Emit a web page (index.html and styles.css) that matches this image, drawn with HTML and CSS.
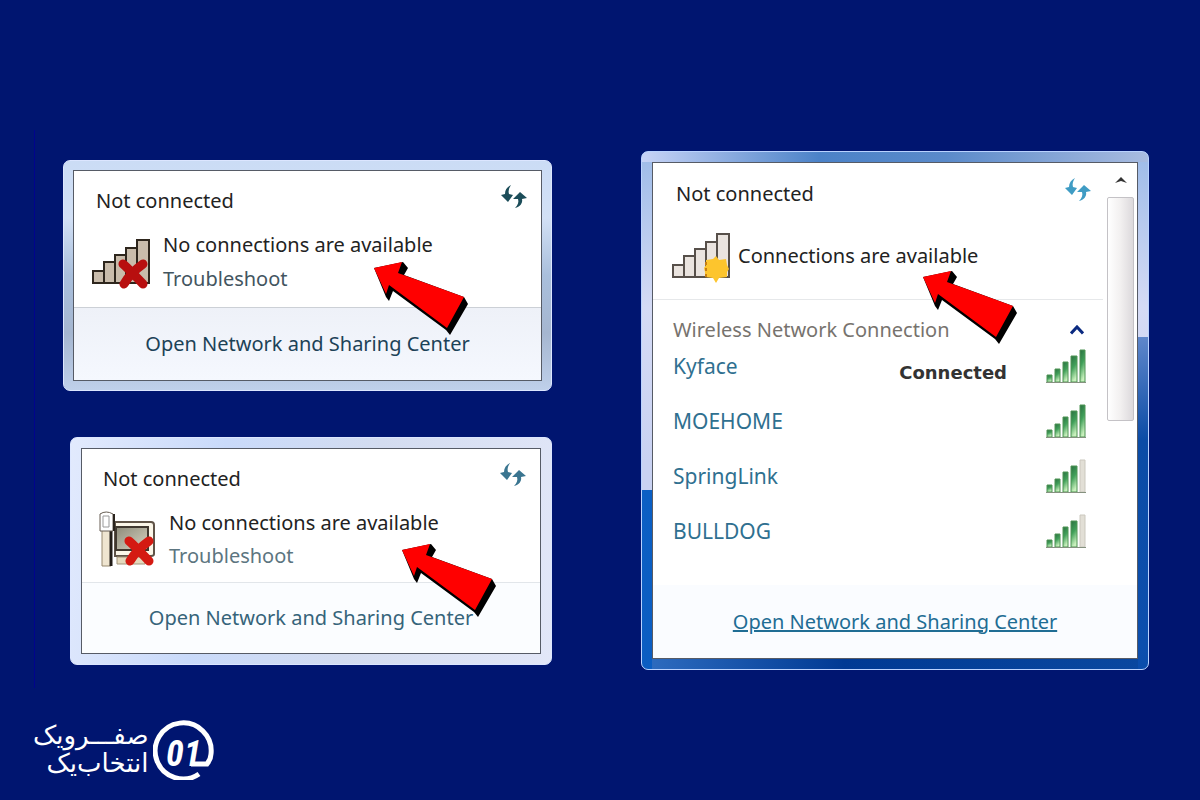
FILE: index.html
```
<!DOCTYPE html>
<html lang="en">
<head>
  <meta charset="UTF-8">
  <meta name="viewport" content="width=device-width, initial-scale=1.0">
  <title>Network connections</title>
  <link rel="stylesheet" href="styles.css">
</head>
<body>
  <!-- shared shapes -->
  <svg class="defs" width="0" height="0" aria-hidden="true">
    <defs>
      <linearGradient id="green" x1="0" y1="0" x2="0.3" y2="1">
        <stop offset="0" stop-color="#2a7040"/>
        <stop offset="0.5" stop-color="#41a05a"/>
        <stop offset="1" stop-color="#c9f0bd"/>
      </linearGradient>
      <linearGradient id="screen" x1="0" y1="0" x2="1" y2="1">
        <stop offset="0" stop-color="#8d8b7a"/>
        <stop offset="1" stop-color="#d8d4c2"/>
      </linearGradient>
      <symbol id="arrow" viewBox="0 0 94 73">
        <path fill="#000" d="M0 6 29 0 34 6 30 13 90 35 94 42 76 73 72 68 19 29 15 39 12 35z"/>
        <path fill="#f00" d="M0 6 28 0 24 11 90 35 73 66 15 23 12 32z"/>
      </symbol>
      <symbol id="refresh" viewBox="0 0 26 24">
        <path d="M10 0C6 2 4 5 4 9L0 10l7 7 5-7-4-1C7 6 8 3 10 0z"/>
        <path d="M19 7l-7 7 5 0c1 3 0 6-3 9 5-1 8-5 7-9l5-1z"/>
      </symbol>
      <symbol id="cross" viewBox="0 0 30 30">
        <path d="M5 5C11 10 18 18 25 25M25 5C18 10 10 18 6 25" fill="none" stroke-width="9" stroke-linecap="round"/>
      </symbol>
      <symbol id="bars" viewBox="0 0 58 46">
        <path stroke-width="2" d="M1 32h11v12H1zM12 23h11v21H12zM23 16h11v28H23zM34 9h11v35H34zM45 1h12v43H45z"/>
      </symbol>
      <symbol id="signal" viewBox="0 0 40 34">
        <g fill="url(#green)" stroke="#4f9455">
          <path d="M1 26h5v7H1z"/>
          <path d="M9 20h5v13H9z"/>
          <path d="M17 13h5v20h-5z"/>
          <path d="M25 7h6v26h-6z"/>
        </g>
        <path class="last-bar" d="M34 1h5v32h-5z"/>
        <path d="M0 33.500h40" stroke="#85917f"/>
      </symbol>
    </defs>
  </svg>

  <main class="panels">
    <div class="column">
      <section class="window">
        <div class="window-body">
          <div class="status">
            <div class="status-head">
              <h2>Not connected</h2>
              <button class="refresh dark" aria-label="Refresh"><svg width="26" height="24"><use href="#refresh"/></svg></button>
            </div>
            <div class="status-row">
              <svg class="status-icon" width="58" height="54" viewBox="0 0 58 54">
                <use href="#bars" y="4" width="58" height="46" fill="#c9bcab" stroke="#2e261d"/>
                <use href="#cross" x="26" y="24" width="30" height="30" stroke="#b80f0f"/>
              </svg>
              <div class="status-text">
                <p>No connections are available</p>
                <a href="#" class="trouble">Troubleshoot</a>
              </div>
            </div>
            <svg class="arrow" width="94" height="73"><use href="#arrow"/></svg>
          </div>
          <footer class="window-foot"><a href="#">Open Network and Sharing Center</a></footer>
        </div>
      </section>

      <section class="window window-light">
        <div class="window-body">
          <div class="status">
            <div class="status-head">
              <h2>Not connected</h2>
              <button class="refresh" aria-label="Refresh"><svg width="26" height="24"><use href="#refresh"/></svg></button>
            </div>
            <div class="status-row">
              <svg class="status-icon" width="58" height="56" viewBox="0 0 58 56">
                <path d="M16 11h36q3 0 3 3v29q0 2-3 2H16z" fill="#fbf6e8" stroke="#5f5347" stroke-width="2"/>
                <path d="M17 16h32v23H17z" fill="url(#screen)" stroke="#40382f" stroke-width="2"/>
                <path d="M18 46h28v7H18z" fill="#e4d9bd" stroke="#a2947a"/>
                <path d="M3 19h9v36H3z" fill="#efe5d0" stroke="#96886f"/>
                <path d="M12 19v36" stroke="#221d18" stroke-width="3"/>
                <path d="M1 3q6-4 13 0v17H1z" fill="#fff" stroke="#665d52"/>
                <path d="M4 5h6v11H4z" fill="#fff" stroke="#999"/>
                <path d="M15 3v17" stroke="#29231d" stroke-width="2"/>
                <use href="#cross" x="25" y="25" width="30" height="30" stroke="#d41a12"/>
              </svg>
              <div class="status-text">
                <p>No connections are available</p>
                <a href="#" class="trouble">Troubleshoot</a>
              </div>
            </div>
            <svg class="arrow" width="94" height="73"><use href="#arrow"/></svg>
          </div>
          <footer class="window-foot"><a href="#">Open Network and Sharing Center</a></footer>
        </div>
      </section>
    </div>

    <section class="window window-blue">
      <div class="window-body">
        <div class="scroll-area">
          <div class="scroll-content">
            <div class="status">
              <div class="status-head">
                <h2>Not connected</h2>
                <button class="refresh bright" aria-label="Refresh"><svg width="26" height="24"><use href="#refresh"/></svg></button>
              </div>
              <div class="status-row">
                <svg class="status-icon" width="58" height="50" viewBox="0 0 58 50">
                  <use href="#bars" width="58" height="46" fill="#eae4df" stroke="#57504a"/>
                  <path d="M44 23l3 4 7-1 1 6 2 4-2 3v5l-8 1-3 5-3-5-8-1v-5l-1-4 2-3v-5l7-1z" fill="#fdc52d"/>
                  <path d="M34 29v15" stroke="#c67f12" stroke-width="2" stroke-dasharray="3 3"/>
                </svg>
                <div class="status-text"><p>Connections are available</p></div>
              </div>
              <svg class="arrow" width="94" height="73"><use href="#arrow"/></svg>
            </div>
            <div class="group-head">
              <h3>Wireless Network Connection</h3>
              <button class="collapse" aria-label="Collapse"><svg width="14" height="10" viewBox="0 0 14 10"><path d="M1 8.500 7 2l6 6.500" fill="none" stroke="#0a2a80" stroke-width="3"/></svg></button>
            </div>
            <ul class="networks">
              <li><a href="#">Kyface</a><strong>Connected</strong><svg class="signal" width="40" height="34"><use href="#signal"/></svg></li>
              <li><a href="#">MOEHOME</a><svg class="signal" width="40" height="34"><use href="#signal"/></svg></li>
              <li><a href="#">SpringLink</a><svg class="signal weak" width="40" height="34"><use href="#signal"/></svg></li>
              <li><a href="#">BULLDOG</a><svg class="signal weak" width="40" height="34"><use href="#signal"/></svg></li>
            </ul>
          </div>
          <div class="scrollbar">
            <button aria-label="Scroll up"><svg width="12" height="7" viewBox="0 0 12 7"><path d="M0 6 6 0l6 6-6-2z" fill="#333"/></svg></button>
            <div class="thumb"></div>
          </div>
        </div>
        <footer class="window-foot"><a href="#">Open Network and Sharing Center</a></footer>
      </div>
    </section>
  </main>

  <div class="brand">
    <p lang="fa" dir="rtl">صفـــرویک<br>انتخاب‌یک</p>
    <svg width="62" height="62" viewBox="0 0 62 62" role="img" aria-label="01">
      <path d="M46 56A28 28 0 1 1 58 36Q58 41 54 46H38" fill="none" stroke="#fff" stroke-width="5"/>
      <text x="13" y="48" class="brand-mark">01</text>
    </svg>
  </div>
</body>
</html>
```
FILE: styles.css
```
* {
  box-sizing: border-box;
}

body {
  margin: 0;
  min-height: 100vh;
  display: flow-root;
  background: #001570;
  font-family: "Noto Sans", "Open Sans", sans-serif;
  font-size: 20px;
  line-height: 34px;
  color: #222;
}

h2, h3, p, ul {
  margin: 0;
  padding: 0;
  font-size: inherit;
  font-weight: normal;
}

a {
  color: #1c4257;
  text-decoration: none;
}

button {
  padding: 0;
  border: none;
  background: none;
  cursor: pointer;
}

svg {
  display: block;
  flex: none;
}

.defs {
  position: absolute;
}

.panels {
  display: grid;
  grid-template-columns: 489fr 508fr;
  gap: 89px;
  margin: 130px 0 0 34px;
  padding: 21px 51px 18px 28px;
  border-left: 1px solid #00048c;
}

.column {
  display: flex;
  flex-direction: column;
  gap: 46px;
  padding-top: 9px;
}

.window {
  display: flex;
  padding: 9px;
  border: 1px solid #dce6ff;
  border-radius: 7px;
  background: linear-gradient(#cbdcf5, #d2e0f5 25%, #a9bfdc 50%, #a5b6d0 75%, #bfd0ea);
}

.window-body {
  flex: 1;
  display: flex;
  flex-direction: column;
  border: 1px solid #565b66;
  background: #fff;
}

.status {
  position: relative;
  padding: 13px 14px 11px 18px;
  border-bottom: 1px solid #ccd0d6;
}

.status-head {
  display: flex;
  justify-content: space-between;
  padding-left: 4px;
}

.refresh {
  height: 26px;
  fill: #3a7590;
}

.refresh.dark {
  fill: #1c4d59;
}

.refresh.bright {
  fill: #3f9cc4;
}

.status-row {
  display: flex;
  align-items: center;
  gap: 13px;
  padding-top: 10px;
}

.trouble {
  display: block;
  color: #43555f;
}

.arrow {
  position: absolute;
  top: 91px;
  left: 300px;
}

.window-foot {
  flex: 1;
  display: flex;
  align-items: center;
  justify-content: center;
  min-height: 72px;
  background: linear-gradient(#eef1f8, #f5f8fe);
}

/* second window */
.window-light {
  margin-left: 7px;
  padding: 10px;
  background: linear-gradient(100deg, #e2eafd, #c9dafa 30%, #d3dcf0 60%, #e2e7f8);
}

.window-light .status {
  padding: 13px 14px 10px 17px;
  border-color: #e2e6ea;
}

.window-light .status-row {
  gap: 12px;
}

.window-light .status-text {
  line-height: 33px;
}

.window-light .window-foot {
  min-height: 70px;
  background: #fbfdff;
}

.window-light .window-foot a {
  color: #36647a;
}

.window-light .trouble {
  color: #5c7580;
}

.window-light .arrow {
  top: 95px;
  left: 320px;
}

/* window with the list of networks */
.window-blue {
  padding: 10px;
  border-color: #b9d2ff;
  background:
    linear-gradient(#5f87cb, #0b4ca6 20%, #0c4fae 60%, #003c98) right 185px / 10px 100% no-repeat,
    linear-gradient(#0b5fc4, #0b5cc0 60%, #1c4fa8) left 338px / 10px 100% no-repeat,
    linear-gradient(90deg, #2f6dc0, #003a94 40%, #0a48a0) bottom / 100% 10px no-repeat,
    linear-gradient(90deg, #c8d4f6, #4b82c8 35%, #5a8aca 60%, #a9bce0) top / 100% 10px no-repeat,
    linear-gradient(#9dbbe8, #d5dbf5 30%, #c9d2f2 60%);
}

.scroll-area {
  display: flex;
}

.scroll-content {
  flex: 1;
}

.window-blue .status {
  padding: 14px 12px 16px 19px;
  border-color: #e6e8ea;
}

.window-blue .status-row {
  align-items: flex-start;
  gap: 8px;
  padding-top: 22px;
}

.window-blue .status-text {
  line-height: 46px;
}

.window-blue .arrow {
  top: 108px;
  left: 270px;
}

.group-head {
  display: flex;
  align-items: center;
  justify-content: space-between;
  padding: 13px 19px 0 20px;
  color: #77736e;
}

.networks {
  list-style: none;
  padding: 2px 17px 16px 20px;
}

.networks li {
  display: flex;
  align-items: center;
  height: 55px;
  padding-bottom: 21px;
}

.networks a {
  flex: 1;
  font-size: 21px;
  color: #2f7090;
}

.networks strong {
  margin: 14px 39px 0 0;
  font-family: "DejaVu Sans", sans-serif;
  font-size: 18px;
  color: #333;
}

.last-bar {
  fill: var(--last, url(#green));
  stroke: var(--last-line, #4f9455);
}

.weak {
  --last: #e2dfd6;
  --last-line: #cbc8be;
}

.scrollbar {
  display: flex;
  flex-direction: column;
  width: 34px;
  padding: 0 3px 0 4px;
}

.scrollbar button {
  display: flex;
  align-items: center;
  justify-content: center;
  height: 34px;
}

.thumb {
  height: 224px;
  border: 1px solid #c4c2c6;
  border-radius: 2px;
  background: linear-gradient(90deg, #fff, #f2f0f0 50%, #dcd9dc);
}

.window-blue .window-foot {
  min-height: 73px;
  background: #fafcff;
}

.window-blue .window-foot a {
  color: #1f6d94;
  text-decoration: underline;
}

.brand {
  display: flex;
  align-items: center;
  gap: 4px;
  padding: 30px 33px 19px;
  color: #fff;
}

.brand p {
  font-family: "DejaVu Sans", sans-serif;
  font-size: 26px;
  line-height: 28px;
}

.brand-mark {
  fill: #fff;
  font-family: "Liberation Sans Narrow", "Roboto Condensed", Roboto, sans-serif;
  font-size: 36px;
  font-style: italic;
  font-weight: 700;
}
```
